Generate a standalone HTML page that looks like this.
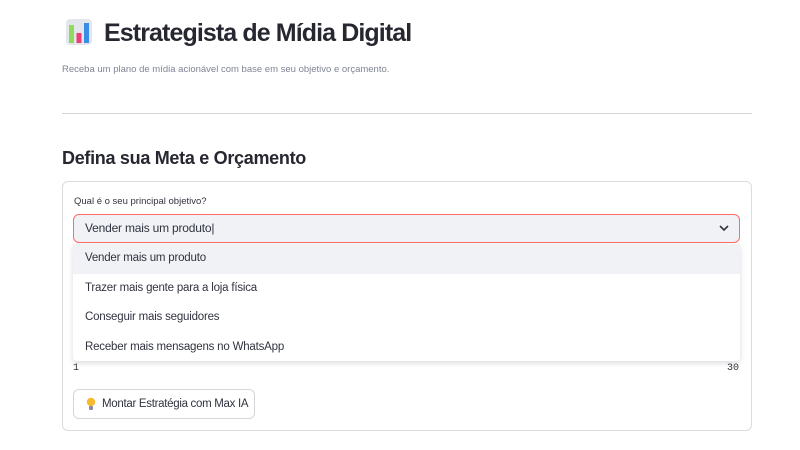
<!DOCTYPE html>
<html><head><meta charset="utf-8"><style>
body{margin:0;width:800px;height:450px;background:#fff;font-family:"Liberation Sans","DejaVu Sans",sans-serif;position:relative;overflow:hidden;color:#31333f}
h1{position:absolute;left:104px;top:19px;margin:0;font-size:25px;font-weight:bold;color:#262730;letter-spacing:-0.9px;white-space:nowrap}
.sub{position:absolute;left:62px;top:64px;font-size:9.5px;color:#808495}
.hr{position:absolute;left:62px;top:113px;width:690px;height:1px;background:#d6d6d9}
h2{position:absolute;left:62px;top:148px;margin:0;font-size:18px;font-weight:bold;color:#262730;letter-spacing:-0.3px}
.card{position:absolute;left:62px;top:181px;width:688px;height:248px;border:1px solid #dcdce0;border-radius:6px}
.lab{position:absolute;left:74px;top:196px;font-size:9.5px;color:#31333f}
.sel{position:absolute;left:73px;top:214px;width:665px;height:27px;border:1px solid #ff6b6b;border-radius:6px;background:#f0f2f6;font-size:12px;line-height:27px;text-indent:11px;letter-spacing:-0.2px}
.dd{position:absolute;left:73px;top:244px;width:667px;height:117px;background:#fff;border-radius:4px;box-shadow:0 2px 6px rgba(0,0,0,.15)}
.dd div{height:29.5px;line-height:29.5px;font-size:11.5px;padding-left:12px;letter-spacing:-0.2px}
.n{position:absolute;top:363px;font-family:"Liberation Mono",monospace;font-size:10px}
.btn{position:absolute;left:73px;top:389px;width:180px;height:28px;border:1px solid #d6d6d9;border-radius:6px;font-size:11.5px;line-height:28px;text-indent:28px;white-space:nowrap;letter-spacing:-0.3px}
</style></head><body>
<svg style="position:absolute;left:66px;top:19px" width="26" height="26"><rect width="26" height="26" rx="4" fill="#e4e6ee"/><rect x="3" y="6" width="5" height="18" fill="#8fdc5a"/><rect x="10.5" y="14" width="5" height="10" fill="#ec4074"/><rect x="18" y="4" width="5" height="20" fill="#3a8de6"/></svg>
<h1>Estrategista de Mídia Digital</h1>
<div class="sub">Receba um plano de mídia acionável com base em seu objetivo e orçamento.</div>
<div class="hr"></div>
<h2>Defina sua Meta e Orçamento</h2>
<div class="card"></div>
<div class="lab">Qual é o seu principal objetivo?</div>
<div class="sel">Vender mais um produto|<svg style="position:absolute;right:10px;top:10px" width="10" height="7"><path d="M1 1l4 4 4-4" stroke="#31333f" stroke-width="1.6" fill="none"/></svg></div>
<div class="dd"><div style="background:#f0f2f6">Vender mais um produto</div><div>Trazer mais gente para a loja física</div><div>Conseguir mais seguidores</div><div>Receber mais mensagens no WhatsApp</div></div>
<div class="n" style="left:73px">1</div><div class="n" style="left:727px">30</div>
<div class="btn">Montar Estratégia com Max IA<svg style="position:absolute;left:12px;top:7px" width="10" height="14"><circle cx="5" cy="5" r="4.2" fill="#f7b92e"/><rect x="3" y="9" width="4" height="4" rx="1" fill="#8a8aa0"/></svg></div>
</body></html>
